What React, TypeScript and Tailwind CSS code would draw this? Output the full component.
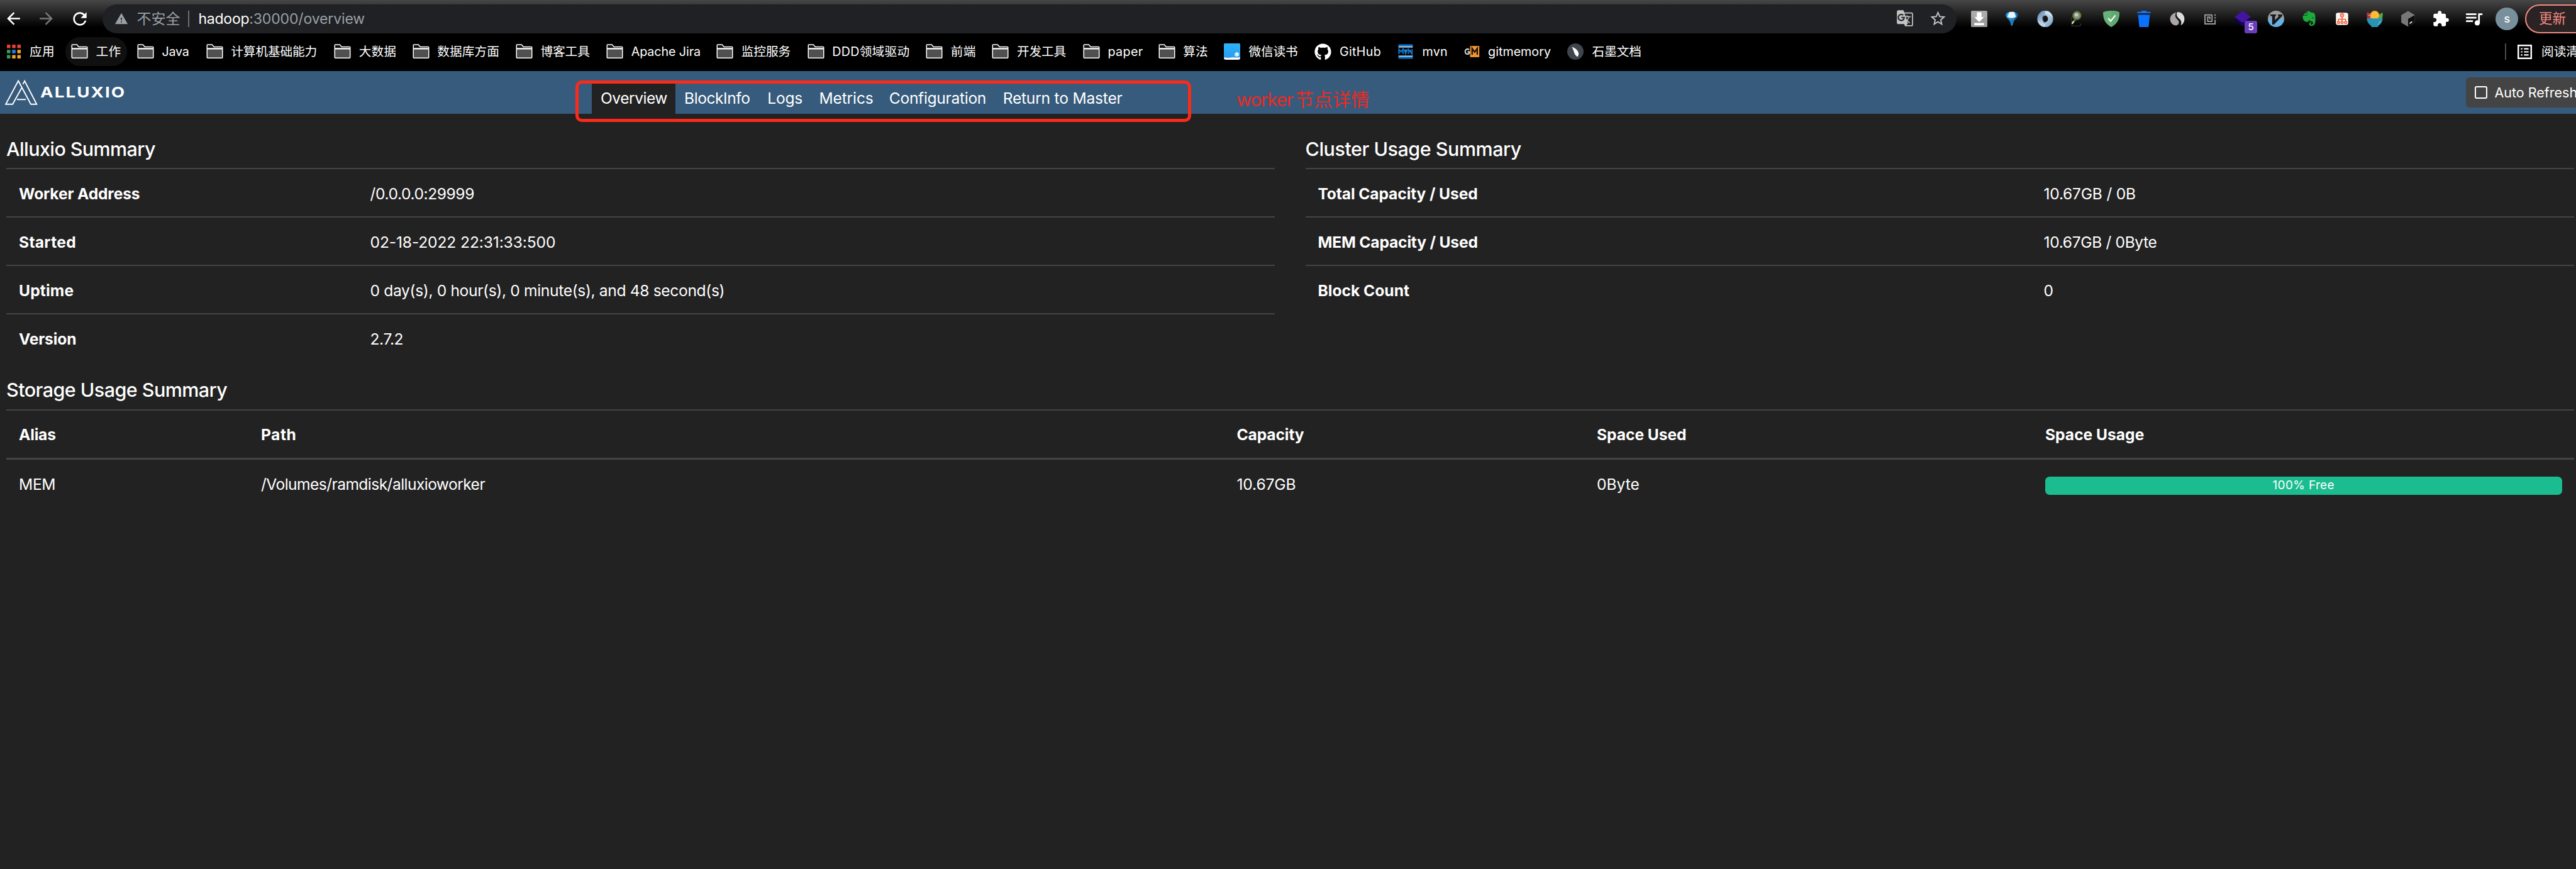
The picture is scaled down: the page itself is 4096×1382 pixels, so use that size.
import { useLayoutEffect, useRef, useState, type ReactNode } from "react";
import {
  MdArrowBack,
  MdArrowForward,
  MdExtension,
  MdGTranslate,
  MdQueueMusic,
  MdRefresh,
  MdStarBorder,
  MdWarning,
} from "react-icons/md";
import { FaEvernote, FaGithub } from "react-icons/fa";

/** Single-line text tracked so that it takes exactly `w` pixels. */
function Fit({ w, children, className = "" }: { w: number; children: string; className?: string }) {
  const ref = useRef<HTMLSpanElement>(null);
  const [spacing, setSpacing] = useState(0);
  useLayoutEffect(() => {
    if (!ref.current) return;
    const natural = ref.current.offsetWidth;
    setSpacing((w - natural) / Math.max(1, children.length));
  }, [w, children]);
  return (
    <span
      ref={ref}
      className={"inline-block whitespace-nowrap " + className}
      style={{ letterSpacing: `${spacing}px` }}
    >
      {children}
    </span>
  );
}

/* ---------- icons ---------- */

function Ico({ children, className = "size-[26px]" }: { children: ReactNode; className?: string }) {
  return (
    <svg viewBox="0 0 32 32" className={className + " shrink-0"} fill="none">
      {children}
    </svg>
  );
}

const Folder = () => (
  <Ico className="size-[27px]">
    <path d="M1.5 9.5V3.5a1 1 0 0 1 1-1h8.5l3.5 4h15a1 1 0 0 1 1 1v2z" fill="#111" stroke="#fff" strokeWidth="1.8" strokeLinejoin="round" />
    <path d="M1.5 10.5h29v16a1 1 0 0 1-1 1h-27a1 1 0 0 1-1-1z" fill="#505050" stroke="#fff" strokeWidth="1.8" strokeLinejoin="round" />
  </Ico>
);

const AppsGrid = () => (
  <Ico className="h-[22px] w-[22px]">
    {["#ea4335", "#ea4335", "#ea4335", "#34a060", "#1a84f0", "#f2a52b", "#34a060", "#f2a52b", "#f2a52b"].map((c, i) => (
      <rect key={i} x={(i % 3) * 12} y={Math.floor(i / 3) * 12} width="8" height="8" fill={c} />
    ))}
  </Ico>
);

const WeRead = () => (
  <Ico>
    <defs>
      <linearGradient id="wr" x1="0" y1="0" x2="0" y2="1">
        <stop offset="0" stopColor="#2cb4fb" />
        <stop offset="1" stopColor="#2c9bf2" />
      </linearGradient>
    </defs>
    <rect width="32" height="32" rx="4" fill="#fff" />
    <path d="M4 0h24a4 4 0 0 1 4 4v23c-8 2-14-1-20 1-5 1-9-1-12 0V4a4 4 0 0 1 4-4z" fill="url(#wr)" />
    <circle cx="25.5" cy="21.5" r="4" fill="#e8f7ff" />
    <circle cx="22.5" cy="23.5" r="2" fill="#a6defc" />
  </Ico>
);

const Mvn = () => (
  <Ico>
    <rect x="2" y="2" width="28" height="4" fill="#0b7ad4" />
    <rect x="2" y="6" width="28" height="2" fill="#dfe9f2" />
    <path d="M3 21V11.500l4 5 4-5V21M13.500 11.500 16 20l3-8.500M21.500 21V11.500l7 9V11" stroke="#0b74cc" strokeWidth="2.600" />
    <path d="M16 12v4M25 13v3" stroke="#cfe4f6" strokeWidth="1" />
    <rect x="2" y="24" width="28" height="2" fill="#dfe9f2" />
    <rect x="2" y="26" width="28" height="4" fill="#0b7ad4" />
  </Ico>
);

const GitMemory = () => (
  <Ico>
    <path d="M11 12.500a4.500 5 0 1 0 .5 6.500v-2.500H8" stroke="#e8e8e8" strokeWidth="2.400" />
    <rect x="13" y="5" width="18" height="22" fill="#f0952f" />
    <path d="M17 22V10l5 7 5-7v12" stroke="#1b1108" strokeWidth="2.800" />
  </Ico>
);

const Shimo = () => (
  <Ico>
    <circle cx="16" cy="16" r="16" fill="#40464e" />
    <path d="M9 7c5 1 11 5 13 11 .8 3 0 6-2 8-4-2-6-6-7-10-1-3-2-6-4-9z" fill="#fff" />
  </Ico>
);

const Download = () => (
  <Ico>
    <rect width="32" height="32" rx="2" fill="#9a9a9a" />
    <rect x="1" y="1" width="30" height="12" fill="#ababab" />
    <path d="M11.500 3h9v9.500h5L16 22 6.500 12.500h5z" fill="#fff" />
    <rect x="6.500" y="24" width="19" height="4.500" fill="#fff" />
  </Ico>
);

const Balloon = () => (
  <Ico>
    <defs>
      <linearGradient id="bl" x1="0" y1="0" x2="1" y2="0">
        <stop offset="0" stopColor="#1193e8" />
        <stop offset=".45" stopColor="#46b6f7" />
        <stop offset="1" stopColor="#075db0" />
      </linearGradient>
      <linearGradient id="bl2" x1="0" y1="0" x2="0" y2="1">
        <stop offset="0" stopColor="#000" stopOpacity="0" />
        <stop offset="1" stopColor="#001b38" stopOpacity=".9" />
      </linearGradient>
    </defs>
    <path d="M4 8c1-4 5-6 12-6s11 2 12 6c.5 3-2 6-5 9-3 3-5 7-6 13h-2c-1-6-3-10-6-13C6 14 3.500 11 4 8z" fill="url(#bl)" />
    <path d="M11 3c3-1 7-1 10 0l3 9c-5 3-12 3-17 0z" fill="#e6f5ff" />
    <path d="M4.500 10c6 6 17 6 23 0-1 4-7 7-10 20h-2C13 17 5.500 14 4.500 10z" fill="url(#bl2)" />
    <path d="M12 14l3 14M16 15v13M20 14l-3 14" stroke="#2fa2ee" strokeWidth="1" />
  </Ico>
);

const Ring = () => (
  <Ico>
    <defs>
      <linearGradient id="rg" x1="0" y1="0" x2="1" y2="1">
        <stop offset="0" stopColor="#6f93b8" />
        <stop offset=".5" stopColor="#b9d0e6" />
        <stop offset="1" stopColor="#86a9cb" />
      </linearGradient>
    </defs>
    <ellipse cx="16" cy="16" rx="10.500" ry="11.500" stroke="url(#rg)" strokeWidth="10" />
    <path d="M16 1c8 0 14 6 14.500 13-3-5-8-8-14.500-7z" fill="#d3e2f0" />
    <path d="M16 31c-7 0-13-5-14.500-12 4 5 9 7 14.500 6z" fill="#c0d5e9" />
    <path d="M12 9c-2 4-2 11 3 15" stroke="#4c6f95" strokeWidth="1.500" />
  </Ico>
);

const Magnifier = () => (
  <Ico>
    <path d="M6 11c-2 0-2 1-2 5 0 1-1 1.500-2 1.500 1 0 2 .5 2 1.500v11h15c3 0 3-2 3-5" stroke="#333" strokeWidth="1.500" />
    <path d="M11 17 5.500 24.500" stroke="#5f7d2c" strokeWidth="3.500" strokeLinecap="round" />
    <path d="M7 21.500 5 24.500" stroke="#e9efd8" strokeWidth="2.500" strokeLinecap="round" />
    <circle cx="14" cy="9.500" r="7.500" fill="#8b8f93" stroke="#5f7d2c" strokeWidth="2.600" />
    <circle cx="13" cy="8" r="3.500" fill="#c4c8cc" />
  </Ico>
);

const Shield = () => (
  <Ico>
    <path d="M16 0c6 0 11 1 16 3 0 12-3 22-16 29C3 25 0 15 0 3 5 1 10 0 16 0z" fill="#67b279" />
    <path d="M16 0c6 0 11 1 16 3 0 12-3 22-16 29z" fill="#5fa871" />
    <path d="m10 15 5 5.500L24 9" stroke="#fff" strokeWidth="2.600" />
  </Ico>
);

const Trash = () => (
  <Ico>
    <path d="M11 0h10v2h7l2 3H2l2-3h7z" fill="#0b72ff" />
    <path d="M4.500 8h23L25 32H7z" fill="#0b72ff" />
  </Ico>
);

const Leaf = () => (
  <Ico>
    <path d="M14 3.500C7 5 2 10 2 16.500 2 23 7 28.500 14 29c4-1 6-4 5-8-1-3-5-5-6.500-9-1-3 0-6 1.500-8.500z" fill="#aaa5a5" />
    <path d="M15.500 3C23 1.500 30 8 30 16c0 6-3 11-7.500 12.500 1.500-3 2-6 .5-9-2-4-6-5-7.500-9-.8-2.500-.7-5 0-7.500z" fill="#dcdcdc" />
  </Ico>
);

const Maze = () => (
  <Ico>
    <g stroke="#9a9a9a" strokeWidth="2.400">
      <path d="M20 8.200H6.200v17.600H26V18" />
      <path d="M20 8v13h-8.500v-8.500H16V17" />
      <path d="M26 7v3M26 12.500v3M26 18v3" />
    </g>
  </Ico>
);

const PurpleTile = () => (
  <Ico>
    <path d="M1 19 16 8l15 11-15 12z" fill="#150259" />
    <path d="M16 0 32 12 16 24 0 12z" fill="#43159f" />
  </Ico>
);

const Vim = () => (
  <Ico>
    <path d="M0 16a16 16 0 0 1 32 0z" fill="#9c9c9c" />
    <path d="M0 16a16 16 0 0 0 32 0z" fill="#65b1e3" />
    <path d="M5 7.500h11v3h-2v8L22 10.500h-2v-3h8v3L12 27H8.500V10.500H5z" fill="#181818" />
  </Ico>
);

const TreeApp = () => (
  <Ico>
    <rect x="4" y="4" width="24" height="24" rx="4" fill="#fff7f2" />
    <g stroke="#ee5a36" strokeWidth="1.800">
      <circle cx="16" cy="9" r="3.200" />
      <path d="M16 12v10M9 22v-5.500h14V22" />
      <circle cx="9" cy="23" r="2.200" />
      <circle cx="16" cy="23" r="2.200" />
      <circle cx="23" cy="23" r="2.200" />
    </g>
    <circle cx="16" cy="9" r="1.200" fill="#ee5a36" />
  </Ico>
);

const Bowl = () => (
  <Ico>
    <path d="M1 3c5 0 12 5 12 13H2C0 12 0 7 1 3z" fill="#a93640" />
    <path d="M31 3c1 5 1 9-1 13H19C21 10 26 7 31 3z" fill="#57a845" />
    <circle cx="16" cy="9" r="9" fill="#f7a823" />
    <circle cx="16" cy="9" r="6.800" fill="#fbc34a" />
    <path d="M16 2v14M10 5l12 9M22 5l-12 9" stroke="#f7a823" strokeWidth="1" />
    <circle cx="5" cy="9" r="1.100" fill="#f7d5cf" />
    <circle cx="8" cy="13" r="1.100" fill="#f7d5cf" />
    <path d="M.5 15h31c0 6-3 11-8 14l-1 3h-13l-1-3C4 26 .5 21 .5 15z" fill="#2a93b4" />
    <path d="M27 20c-1 3-2 5-5 7" stroke="#9fdcf0" strokeWidth="1.200" />
  </Ico>
);

const Cube = () => (
  <Ico>
    <path d="M16 1 29 8.500v15L16 31 3 23.500v-15z" fill="#8d8d8d" />
    <path d="M16 1 29 8.500 16 16v15L3 23.500v-15z" fill="#777" />
    <path d="M29 8.500v15L16 31V16z" fill="#0c0c0c" />
    <path d="m19 25 5-3.500" stroke="#fff" strokeWidth="2" />
  </Ico>
);

const ReadingList = () => (
  <svg viewBox="0 0 28 28" className="size-[23px] shrink-0" fill="none" stroke="#fff">
    <rect x="1.500" y="1.500" width="25" height="25" strokeWidth="3" />
    <path d="M6.500 8h3M6.500 14h3M6.500 20h3M12.500 8h9M12.500 14h9M12.500 20h9" strokeWidth="2.600" />
  </svg>
);

const AlluxioMark = () => (
  <svg viewBox="22 46 196 152" className="h-[41.500px] w-[53.500px] shrink-0" fill="none" stroke="#fff" strokeWidth="7">
    <path d="M122 98 116 108 70 191.500H30L103 55l73 136.500h34L140 56l-10 19" />
    <path d="M95 164h52" />
  </svg>
);

/* ---------- browser chrome ---------- */

const extensions: ReactNode[] = [
  <Download />,
  <Balloon />,
  <Ring />,
  <Magnifier />,
  <Shield />,
  <Trash />,
  <Leaf />,
  <Maze />,
  <div className="relative flex">
    <PurpleTile />
    <span className="absolute top-[16.500px] left-[16px] flex h-[19.500px] w-[19.500px] items-center justify-center rounded-[3px] bg-[#6a3dbb] text-[15px] leading-none font-medium">
      5
    </span>
  </div>,
  <Vim />,
  <FaEvernote className="size-[27px] text-[#1ba83c]" />,
  <TreeApp />,
  <Bowl />,
  <Cube />,
  <MdExtension className="size-[28px]" />,
  <MdQueueMusic className="size-[33px]" />,
  <span className="flex size-[36px] shrink-0 items-center justify-center rounded-full bg-[#78909c] text-[18px] font-medium">s</span>,
];

function Toolbar() {
  return (
    <div className="flex h-[59px] items-center bg-[linear-gradient(to_bottom,#464646_0px,#000_43px)]">
      <div className="-ml-[5px] flex">
        <span className="flex w-[52.500px] justify-center"><MdArrowBack className="size-[31px]" /></span>
        <span className="flex w-[52.500px] justify-center text-[#777]"><MdArrowForward className="size-[31px]" /></span>
        <span className="flex w-[53px] justify-center"><MdRefresh className="size-[32px]" /></span>
      </div>
      <div className="ml-[9.500px] flex h-[46px] w-[2948.500px] shrink-0 items-center rounded-full bg-[#202124] pl-[19px] text-[23px] leading-[30px] text-[#9aa0a6]">
        <MdWarning className="size-[22px] shrink-0" />
        <Fit w={69} className="ml-[14px]">不安全</Fit>
        <span className="mr-[15px] ml-[12px] h-[26px] w-[2px] bg-[#6a6d71]" />
        <Fit w={80.5} className="text-white">hadoop</Fit>
        <Fit w={184}>:30000/overview</Fit>
        <span className="mr-[3.500px] ml-auto flex text-[#c4c4c4]">
          <span className="flex w-[52.500px] justify-center"><MdGTranslate className="size-[28px]" /></span>
          <span className="flex w-[52.500px] justify-center"><MdStarBorder className="size-[29px]" /></span>
        </span>
      </div>
      <div className="ml-[9.500px] flex shrink-0 items-center">
        {extensions.map((icon, i) => (
          <span key={i} className="flex w-[52.470px] shrink-0 items-center justify-center">{icon}</span>
        ))}
      </div>
      <div className="ml-[3px] flex h-[46px] w-[160px] shrink-0 items-center rounded-full border-2 border-[#f28b82] bg-[#2b2224] pl-[19.500px] text-[21.500px] text-[#f28b82]">
        更新
      </div>
    </div>
  );
}

type Bookmark = { icon: ReactNode; label: string; text: number; cell: string };

const bookmarks: Bookmark[] = [
  { icon: <Folder />, label: "Java", text: 43, cell: "w-[109.800px]" },
  { icon: <Folder />, label: "计算机基础能力", text: 137, cell: "w-[203.500px]" },
  { icon: <Folder />, label: "大数据", text: 59, cell: "w-[124.400px]" },
  { icon: <Folder />, label: "数据库方面", text: 98.5, cell: "w-[164.300px]" },
  { icon: <Folder />, label: "博客工具", text: 78.5, cell: "w-[144.200px]" },
  { icon: <Folder />, label: "Apache Jira", text: 110, cell: "w-[175.100px]" },
  { icon: <Folder />, label: "监控服务", text: 78.5, cell: "w-[144.400px]" },
  { icon: <Folder />, label: "DDD领域驱动", text: 123, cell: "w-[188.700px]" },
  { icon: <Folder />, label: "前端", text: 39.5, cell: "w-[105.100px]" },
  { icon: <Folder />, label: "开发工具", text: 78.5, cell: "w-[144.500px]" },
  { icon: <Folder />, label: "paper", text: 56, cell: "w-[119.700px]" },
  { icon: <Folder />, label: "算法", text: 39.5, cell: "w-[104.300px]" },
  { icon: <WeRead />, label: "微信读书", text: 78.5, cell: "w-[144.500px]" },
  { icon: <FaGithub className="size-[27px] shrink-0" />, label: "GitHub", text: 66, cell: "w-[131.500px]" },
  { icon: <Mvn />, label: "mvn", text: 41, cell: "w-[104.700px]" },
  { icon: <GitMemory />, label: "gitmemory", text: 100, cell: "w-[165.500px]" },
  { icon: <Shimo />, label: "石墨文档", text: 78.5, cell: "w-[140px]" },
];

function BookmarksBar() {
  return (
    <div className="flex h-[54px] bg-black pb-[8px] text-[19.700px] leading-[28px]">
      <div className="flex w-[103.500px] shrink-0 items-center pl-[10.500px]">
        <AppsGrid />
        <Fit w={39.5} className="ml-[14.500px]">应用</Fit>
      </div>
      <div className="flex w-[98px] shrink-0 items-center rounded-full bg-[#101010] pl-[9.500px]">
        <Folder />
        <Fit w={39.5} className="ml-[12.500px]">工作</Fit>
      </div>
      <div className="ml-[16.500px] flex">
        {bookmarks.map((b) => (
          <div key={b.label} className={"flex shrink-0 items-center " + b.cell}>
            <span className="flex w-[39.500px] shrink-0">{b.icon}</span>
            <Fit w={b.text}>{b.label}</Fit>
          </div>
        ))}
      </div>
      <div className="ml-auto flex w-[113px] shrink-0 items-center">
        <span className="h-[26px] w-[2px] shrink-0 bg-[#4a4a4a]" />
        <span className="mr-[15px] ml-[18px] flex"><ReadingList /></span>
        <span className="whitespace-nowrap">阅读清单</span>
      </div>
    </div>
  );
}

/* ---------- page ---------- */

const tabs = [
  { label: "Overview", text: 106, cell: "w-[133px] bg-[#222]" },
  { label: "BlockInfo", text: 105, cell: "w-[132.300px]" },
  { label: "Logs", text: 56, cell: "w-[82.100px]" },
  { label: "Metrics", text: 86, cell: "w-[111.400px]" },
  { label: "Configuration", text: 154, cell: "w-[180.900px]" },
  { label: "Return to Master", text: 189.5, cell: "w-[215px]" },
];

function Header() {
  return (
    <header className="relative flex h-[67.500px] bg-[#365b7c]">
      <div className="flex w-[941px] shrink-0 items-center pl-[6.500px]">
        <AlluxioMark />
        <Fit w={115} className="ml-[4px] origin-left scale-x-[1.18] text-[23.500px] leading-none font-bold">ALLUXIO</Fit>
      </div>
      <nav className="flex h-[52px] self-end text-[24.600px]">
        {tabs.map((t) => (
          <a key={t.label} className={"flex shrink-0 items-center pt-[3px] pl-[14px] " + t.cell}>
            <Fit w={t.text}>{t.label}</Fit>
          </a>
        ))}
      </nav>
      <label className="ml-auto flex h-[48px] w-[175.500px] shrink-0 items-center self-center rounded-l-[6px] bg-[#444] pl-[14.500px] text-[21.500px]">
        <span className="mr-[12px] size-[19.500px] shrink-0 rounded-[3px] border-2 border-white" />
        <Fit w={132}>Auto Refresh</Fit>
      </label>
      <div className="absolute top-[15px] left-[915px] h-[65.500px] w-[979px] rounded-[10px] border-[5px] border-[#fc2a18]" />
      <div className="absolute top-[25px] left-[1966px] flex items-baseline text-[29.500px] leading-[40px] text-[#ee2a22]">
        <Fit w={90}>worker</Fit>
        <Fit w={118} className="ml-[4px]">节点详情</Fit>
      </div>
    </header>
  );
}

type Row = { name: string; nameW: number; value: string; valueW: number };

const alluxioRows: Row[] = [
  { name: "Worker Address", nameW: 192, value: "/0.0.0.0:29999", valueW: 166 },
  { name: "Started", nameW: 91, value: "02-18-2022 22:31:33:500", valueW: 295 },
  { name: "Uptime", nameW: 87, value: "0 day(s), 0 hour(s), 0 minute(s), and 48 second(s)", valueW: 563.5 },
  { name: "Version", nameW: 91, value: "2.7.2", valueW: 53 },
];

const clusterRows: Row[] = [
  { name: "Total Capacity / Used", nameW: 254.5, value: "10.67GB / 0B", valueW: 146 },
  { name: "MEM Capacity / Used", nameW: 254.5, value: "10.67GB / 0Byte", valueW: 180.5 },
  { name: "Block Count", nameW: 146, value: "0", valueW: 15.5 },
];

function Summary({ title, titleW, rows, nameCell, className }: { title: string; titleW: number; rows: Row[]; nameCell: string; className: string }) {
  return (
    <section className={className}>
      <h5 className="h-[86.600px] pt-[38px] text-[30.500px] leading-[36px] font-medium">
        <Fit w={titleW}>{title}</Fit>
      </h5>
      {rows.map((r) => (
        <div key={r.name} className="flex h-[77.070px] items-center border-t-2 border-[#444] pt-[3px] pl-[20px]">
          <div className={"shrink-0 font-bold " + nameCell}><Fit w={r.nameW}>{r.name}</Fit></div>
          <Fit w={r.valueW}>{r.value}</Fit>
        </div>
      ))}
    </section>
  );
}

const gridCols = "grid grid-cols-[385px_1551.500px_572.500px_713px_821.500px] items-center pl-[20px]";

function Storage() {
  return (
    <section className="mr-[3px] ml-[10px] text-[24.600px]">
      <h5 className="h-[75.700px] pt-[27px] text-[30.500px] leading-[36px] font-medium">
        <Fit w={351.5}>Storage Usage Summary</Fit>
      </h5>
      <div className={gridCols + " h-[80px] border-t-2 border-b-[3px] border-[#444] pt-[2px] font-bold"}>
        <div><Fit w={59}>Alias</Fit></div>
        <div><Fit w={56}>Path</Fit></div>
        <div><Fit w={107}>Capacity</Fit></div>
        <div><Fit w={142.5}>Space Used</Fit></div>
        <div><Fit w={157}>Space Usage</Fit></div>
      </div>
      <div className={gridCols + " h-[79px]"}>
        <div><Fit w={58}>MEM</Fit></div>
        <div><Fit w={356}>/Volumes/ramdisk/alluxioworker</Fit></div>
        <div><Fit w={94}>10.67GB</Fit></div>
        <div><Fit w={68}>0Byte</Fit></div>
        <div className="mt-[4px] flex h-[29.500px] items-center justify-center rounded-[7px] bg-[#1bbc8f] text-[19px]">
          <Fit w={98}>100% Free</Fit>
        </div>
      </div>
    </section>
  );
}

export default function App() {
  return (
    <div className="h-[1382px] w-[4096px] overflow-hidden bg-[#222] font-['Inter','Noto_Sans_CJK_SC',sans-serif] text-white">
      <Toolbar />
      <BookmarksBar />
      <Header />
      <main>
        <div className="flex text-[24.600px]">
          <Summary title="Alluxio Summary" titleW={237} rows={alluxioRows} nameCell="w-[558.500px]" className="ml-[10px] w-[2016.500px]" />
          <Summary title="Cluster Usage Summary" titleW={343} rows={clusterRows} nameCell="w-[1154px]" className="ml-[49px] w-[2017px]" />
        </div>
        <Storage />
      </main>
    </div>
  );
}
